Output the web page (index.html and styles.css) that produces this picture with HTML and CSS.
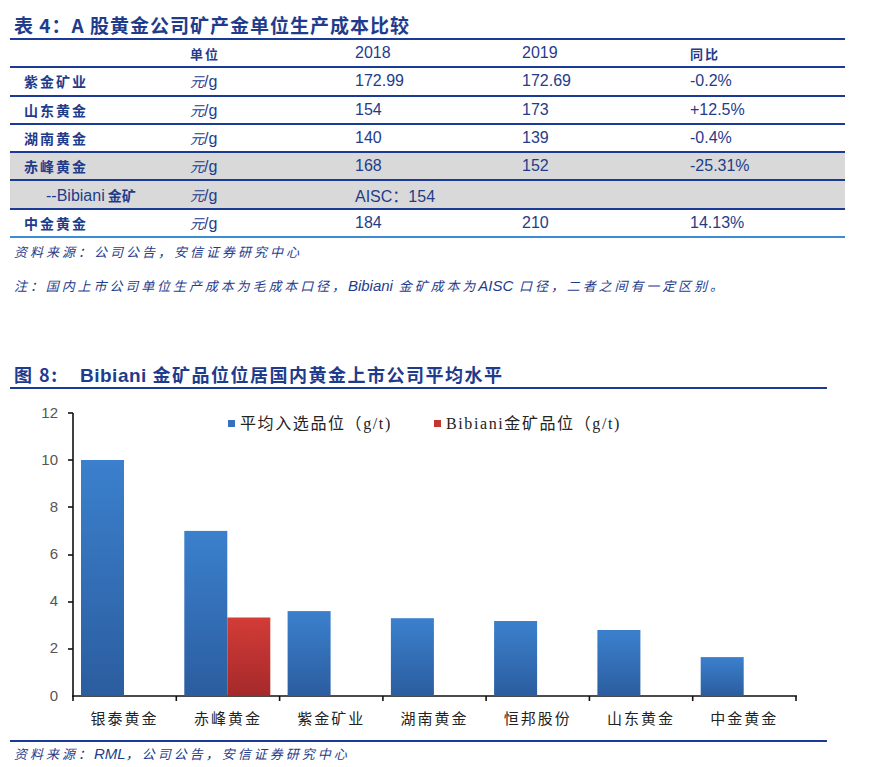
FILE: index.html
```html
<!DOCTYPE html>
<html lang="zh-CN">
<head>
  <meta charset="UTF-8" />
  <title>A股黄金公司矿产金单位生产成本比较</title>
  <link rel="stylesheet" href="styles.css">
</head>
<body>
  <div class="table-title">表 4：A 股黄金公司矿产金单位生产成本比较</div>

  <div class="cost-table">
    <div class="row head">
      <div></div>
      <div class="cn">单位</div>
      <div class="num">2018</div>
      <div class="num">2019</div>
      <div class="cn">同比</div>
    </div>
    <div class="row">
      <div class="name">紫金矿业</div>
      <div class="unit"><i>元</i>/g</div>
      <div class="num">172.99</div>
      <div class="num">172.69</div>
      <div class="num">-0.2%</div>
    </div>
    <div class="row">
      <div class="name">山东黄金</div>
      <div class="unit"><i>元</i>/g</div>
      <div class="num">154</div>
      <div class="num">173</div>
      <div class="num">+12.5%</div>
    </div>
    <div class="row">
      <div class="name">湖南黄金</div>
      <div class="unit"><i>元</i>/g</div>
      <div class="num">140</div>
      <div class="num">139</div>
      <div class="num">-0.4%</div>
    </div>
    <div class="row gray">
      <div class="name">赤峰黄金</div>
      <div class="unit"><i>元</i>/g</div>
      <div class="num">168</div>
      <div class="num">152</div>
      <div class="num">-25.31%</div>
    </div>
    <div class="row gray">
      <div class="name sub"><span class="lat">--Bibiani</span> 金矿</div>
      <div class="unit"><i>元</i>/g</div>
      <div class="num">AISC：154</div>
      <div></div>
      <div></div>
    </div>
    <div class="row last">
      <div class="name">中金黄金</div>
      <div class="unit"><i>元</i>/g</div>
      <div class="num">184</div>
      <div class="num">210</div>
      <div class="num">14.13%</div>
    </div>
  </div>

  <p class="source">资料来源：公司公告，安信证券研究中心</p>
  <p class="source note">注：国内上市公司单位生产成本为毛成本口径，<span class="lat">Bibiani</span> 金矿成本为<span class="lat">AISC</span> 口径，二者之间有一定区别。</p>

  <div class="fig-title"><span class="fig-no">图 8:</span><span class="lat">Bibiani</span> 金矿品位位居国内黄金上市公司平均水平</div>

  <svg class="chart" width="875" height="351" viewBox="0 0 875 351">
    <defs>
      <linearGradient id="gBlue" x1="0" y1="0" x2="0" y2="1">
        <stop offset="0" stop-color="#3b80cd"/>
        <stop offset="1" stop-color="#2b5d9f"/>
      </linearGradient>
      <linearGradient id="gRed" x1="0" y1="0" x2="0" y2="1">
        <stop offset="0" stop-color="#d33c37"/>
        <stop offset="1" stop-color="#a5292a"/>
      </linearGradient>
    </defs>

    <!-- y axis -->
    <g class="ylabels">
      <text x="58" y="29">12</text>
      <text x="58" y="76">10</text>
      <text x="58" y="123">8</text>
      <text x="58" y="170">6</text>
      <text x="58" y="217">4</text>
      <text x="58" y="264">2</text>
      <text x="58" y="312">0</text>
    </g>
    <g class="axis">
      <line x1="73" y1="24" x2="73" y2="308"/>
      <line x1="68" y1="24" x2="73" y2="24"/>
      <line x1="68" y1="71" x2="73" y2="71"/>
      <line x1="68" y1="118" x2="73" y2="118"/>
      <line x1="68" y1="166" x2="73" y2="166"/>
      <line x1="68" y1="213" x2="73" y2="213"/>
      <line x1="68" y1="260" x2="73" y2="260"/>
      <line x1="72" y1="307" x2="797" y2="307"/>
      <line x1="73" y1="307" x2="73" y2="312"/>
      <line x1="176.3" y1="307" x2="176.3" y2="312"/>
      <line x1="279.6" y1="307" x2="279.6" y2="312"/>
      <line x1="382.9" y1="307" x2="382.9" y2="312"/>
      <line x1="486.1" y1="307" x2="486.1" y2="312"/>
      <line x1="589.4" y1="307" x2="589.4" y2="312"/>
      <line x1="692.7" y1="307" x2="692.7" y2="312"/>
      <line x1="796" y1="307" x2="796" y2="312"/>
    </g>

    <!-- bars: 23.58px per unit -->
    <rect x="81" y="71" width="43" height="235.8" fill="url(#gBlue)"/>
    <rect x="184.3" y="141.9" width="43" height="165.1" fill="url(#gBlue)"/>
    <rect x="227.3" y="228.5" width="43" height="78.5" fill="url(#gRed)"/>
    <rect x="287.6" y="222.1" width="43" height="84.9" fill="url(#gBlue)"/>
    <rect x="390.9" y="229.2" width="43" height="77.8" fill="url(#gBlue)"/>
    <rect x="494.1" y="232.0" width="43" height="75.0" fill="url(#gBlue)"/>
    <rect x="597.4" y="241.0" width="43" height="66.0" fill="url(#gBlue)"/>
    <rect x="700.7" y="268.1" width="43" height="38.9" fill="url(#gBlue)"/>

    <!-- legend -->
    <rect x="228" y="31" width="7" height="7" fill="#3771bd"/>
    <text class="legend" x="240" y="40">平均入选品位（g/t)</text>
    <rect x="434" y="31" width="7" height="7" fill="#c23531"/>
    <text class="legend" x="446" y="40">Bibiani金矿品位（g/t)</text>

    <!-- categories -->
    <g class="xlabels">
      <text x="124.6" y="335">银泰黄金</text>
      <text x="227.9" y="335">赤峰黄金</text>
      <text x="331.2" y="335">紫金矿业</text>
      <text x="434.5" y="335">湖南黄金</text>
      <text x="537.7" y="335">恒邦股份</text>
      <text x="641" y="335">山东黄金</text>
      <text x="744.3" y="335">中金黄金</text>
    </g>
  </svg>

  <p class="source fig-source">资料来源：<span class="lat">RML</span>，公司公告，安信证券研究中心</p>
</body>
</html>
```

FILE: styles.css
```css
:root {
  --navy: #1f3c8c;
  --rule: #1a3a96;
  --rule-light: #3d8bd3;
  --gray-row: #d9d9d9;
}

body {
  margin: 0;
  font-family: "Liberation Sans", "Noto Sans CJK SC", sans-serif;
  color: var(--navy);
  background: #fff;
}

.lat {
  font-family: "Liberation Sans", sans-serif;
}

.table-title {
  margin-top: 13px;
  padding-left: 14px;
  height: 25px;
  line-height: 24px;
  font-size: 19px;
  font-weight: bold;
  font-family: "Noto Sans CJK SC", sans-serif;
  letter-spacing: 1px;
}

.cost-table {
  margin-left: 10px;
  width: 835px;
}

.row {
  display: grid;
  grid-template-columns: 170px 165px 167px 168px 165px;
  height: 26.3px;
  border-top: 2px solid var(--rule);
  align-items: center;
  font-size: 16px;
}

.row > div {
  padding-left: 10px;
  white-space: nowrap;
}

.row.gray {
  background: var(--gray-row);
}

.row.last {
  border-bottom: 2px solid var(--rule-light);
}

.row .name {
  padding-left: 14px;
  font-family: "Noto Sans CJK SC", sans-serif;
  font-weight: bold;
  font-size: 14px;
  letter-spacing: 2px;
}

.row .name.sub {
  padding-left: 36px;
  letter-spacing: 0;
}

.row .name.sub .lat {
  font-size: 16px;
  font-weight: normal;
}

.row .cn {
  font-family: "Noto Sans CJK SC", sans-serif;
  font-weight: bold;
  font-size: 13px;
  letter-spacing: 2px;
}

.unit i {
  font-family: "Noto Sans CJK SC", sans-serif;
  font-size: 14px;
}

.source {
  margin: 6px 0 0 14px;
  font-family: "Noto Sans CJK SC", sans-serif;
  font-style: italic;
  font-size: 13px;
  line-height: 16px;
  letter-spacing: 3px;
}

.source .lat {
  font-size: 15px;
  letter-spacing: 0;
}

.source.note {
  margin-top: 18px;
  letter-spacing: 2.9px;
}

.fig-title {
  margin: 68px 0 0 10px;
  width: 813px;
  padding-left: 4px;
  height: 25px;
  line-height: 24px;
  border-bottom: 2px solid var(--rule);
  font-family: "Noto Sans CJK SC", sans-serif;
  font-weight: bold;
  font-size: 18px;
  letter-spacing: 1.5px;
}

.fig-title .fig-no {
  display: inline-block;
  width: 66px;
}

.fig-title .lat {
  font-size: 19px;
  letter-spacing: 0.5px;
}

.chart {
  display: block;
}

.chart .axis line {
  stroke: #111;
  stroke-width: 1.6;
}

.chart .ylabels text {
  text-anchor: end;
  font-family: "Liberation Sans", sans-serif;
  font-size: 15px;
  fill: #555;
}

.chart .xlabels text {
  text-anchor: middle;
  font-family: "Liberation Serif", "Noto Sans CJK SC", serif;
  font-size: 15px;
  letter-spacing: 2px;
  fill: #222;
}

.chart .legend {
  font-family: "Liberation Serif", "Noto Sans CJK SC", serif;
  font-size: 16px;
  letter-spacing: 1.6px;
  fill: #222;
}

.fig-source {
  margin: 0 0 0 10px;
  width: 813px;
  padding: 4px 0 0 4px;
  border-top: 2px solid var(--rule);
}
```
